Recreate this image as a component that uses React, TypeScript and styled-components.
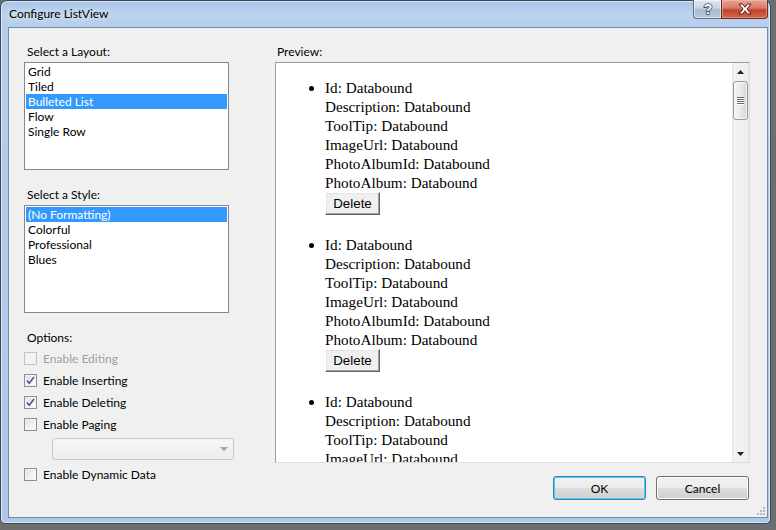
import styled, { createGlobalStyle } from "styled-components";

const GlobalStyle = createGlobalStyle`
  html, body {
    margin: 0;
    padding: 0;
    background: #6e6e6e;
    overflow: hidden;
  }
  body {
    width: 776px;
    height: 530px;
    font-family: "Segoe UI", Lato, "Noto Sans", sans-serif;
    font-size: 12px;
    color: #000;
  }
`;

const layouts = ["Grid", "Tiled", "Bulleted List", "Flow", "Single Row"];
const styles = ["(No Formatting)", "Colorful", "Professional", "Blues"];
const fields = ["Id", "Description", "ToolTip", "ImageUrl", "PhotoAlbumId", "PhotoAlbum"];

const options = [
  { label: "Enable Editing", checked: false, disabled: true },
  { label: "Enable Inserting", checked: true, disabled: false },
  { label: "Enable Deleting", checked: true, disabled: false },
  { label: "Enable Paging", checked: false, disabled: false },
];

export default function App() {
  return (
    <>
      <GlobalStyle />
      <Window>
        <TitleBar>
          <Caption>Configure ListView</Caption>
          <CaptionButtons>
            <HelpButton>
              <svg width="12" height="14" viewBox="0 0 12 14">
                <text
                  x="6"
                  y="12"
                  textAnchor="middle"
                  fontFamily="Liberation Sans, sans-serif"
                  fontWeight="bold"
                  fontSize="14"
                  fill="#fff"
                  stroke="#3b4a5e"
                  strokeWidth="1.6"
                  paintOrder="stroke"
                >
                  ?
                </text>
              </svg>
            </HelpButton>
            <CloseButton>
              <svg width="14" height="12" viewBox="0 0 14 12">
                <path
                  d="M1 1h3.5L7 4.2 9.5 1H13L9 6l4 5H9.5L7 7.8 4.5 11H1l4-5z"
                  fill="#fff"
                  stroke="#5a1d14"
                  strokeWidth="1"
                  strokeLinejoin="round"
                />
              </svg>
            </CloseButton>
          </CaptionButtons>
        </TitleBar>

        <Client>
          <LeftColumn>
            <GroupLabel>Select a Layout:</GroupLabel>
            <ListBox>
              {layouts.map((l) => (
                <ListItem key={l} $selected={l === "Bulleted List"}>
                  {l}
                </ListItem>
              ))}
            </ListBox>

            <GroupLabel $gap>Select a Style:</GroupLabel>
            <ListBox>
              {styles.map((s) => (
                <ListItem key={s} $selected={s === "(No Formatting)"}>
                  {s}
                </ListItem>
              ))}
            </ListBox>

            <GroupLabel $gap>Options:</GroupLabel>
            <OptionList>
              {options.map((o) => (
                <OptionRow key={o.label} $disabled={o.disabled}>
                  <CheckBox $disabled={o.disabled}>
                    {o.checked && (
                      <svg width="9" height="9" viewBox="0 0 9 9">
                        <path
                          d="M1 4.6l2.3 2.6L8 1"
                          fill="none"
                          stroke="#4a5f9c"
                          strokeWidth="1.7"
                        />
                      </svg>
                    )}
                  </CheckBox>
                  {o.label}
                </OptionRow>
              ))}
              <ComboBox>
                <svg width="8" height="5" viewBox="0 0 8 5">
                  <path d="M0 0h8L4 4.5z" fill="#a9a9a9" />
                </svg>
              </ComboBox>
              <OptionRow>
                <CheckBox />
                Enable Dynamic Data
              </OptionRow>
            </OptionList>
          </LeftColumn>

          <RightColumn>
            <GroupLabel $indent>Preview:</GroupLabel>
            <Preview>
              <PreviewContent>
                <BulletList>
                  {[0, 1, 2].map((i) => (
                    <Bullet key={i}>
                      {fields.map((f) => (
                        <div key={f}>{f}: Databound</div>
                      ))}
                      <DeleteButton>Delete</DeleteButton>
                    </Bullet>
                  ))}
                </BulletList>
              </PreviewContent>
              <ScrollBar>
                <ScrollArrow>
                  <svg width="7" height="4" viewBox="0 0 7 4">
                    <path d="M3.5 0L7 4H0z" fill="#222" />
                  </svg>
                </ScrollArrow>
                <ScrollThumb>
                  <Grip />
                  <Grip />
                  <Grip />
                  <Grip />
                </ScrollThumb>
                <ScrollTrack />
                <ScrollArrow>
                  <svg width="7" height="4" viewBox="0 0 7 4">
                    <path d="M0 0h7L3.5 4z" fill="#222" />
                  </svg>
                </ScrollArrow>
              </ScrollBar>
            </Preview>
            <Footer>
              <DialogButton $isDefault>OK</DialogButton>
              <DialogButton>Cancel</DialogButton>
            </Footer>
          </RightColumn>

          <ResizeGrip>
            <svg width="10" height="10" viewBox="0 0 10 10">
              {[
                [8, 2],
                [8, 5],
                [5, 5],
                [8, 8],
                [5, 8],
                [2, 8],
              ].map(([x, y]) => (
                <rect key={`${x}-${y}`} x={x - 1} y={y - 1} width="2" height="2" fill="#b8b8b8" />
              ))}
            </svg>
          </ResizeGrip>
        </Client>
      </Window>
    </>
  );
}

const Window = styled.div`
  box-sizing: border-box;
  width: 771px;
  height: 524px;
  padding: 0 2px 5px 7px;
  border: 1px solid #3a4a5e;
  border-radius: 7px 7px 5px 5px;
  background: linear-gradient(
    180deg,
    #a9c5e6 0px,
    #bcd3ee 14px,
    #b5cdea 26px,
    #adc8e8 100%
  );
  box-shadow: inset 0 0 0 1px rgba(255, 255, 255, 0.55);
`;

const TitleBar = styled.div`
  display: flex;
  align-items: flex-start;
  height: 26px;
`;

const Caption = styled.div`
  padding: 5px 0 0 1px;
  line-height: 15px;
  font-size: 12px;
  color: #000;
  text-shadow: 0 0 6px rgba(255, 255, 255, 0.9);
`;

const CaptionButtons = styled.div`
  display: flex;
  margin-left: auto;
  margin-top: -1px;
`;

const CaptionButton = styled.div`
  box-sizing: border-box;
  height: 19px;
  display: flex;
  align-items: center;
  justify-content: center;
  border: 1px solid #5b6f89;
  border-top: none;
`;

const HelpButton = styled(CaptionButton)`
  width: 28px;
  border-right: none;
  border-bottom-left-radius: 4px;
  background: linear-gradient(180deg, #dfe8f3 0%, #c6d4e5 45%, #a7b9cf 55%, #b8c9dc 100%);
  box-shadow: inset 0 0 0 1px rgba(255, 255, 255, 0.5);
`;

const CloseButton = styled(CaptionButton)`
  width: 47px;
  border-color: #6a2a22;
  border-bottom-right-radius: 4px;
  background: linear-gradient(180deg, #e8a595 0%, #d8786a 45%, #c2432d 55%, #d2654a 100%);
  box-shadow: inset 0 0 0 1px rgba(255, 200, 190, 0.45);
`;

const Client = styled.div`
  position: relative;
  box-sizing: border-box;
  height: 491px;
  display: flex;
  gap: 41px;
  padding: 16px 17px 0 15px;
  background: #f0f0f0;
  border: 1px solid #6f8bae;
`;

const LeftColumn = styled.div`
  width: 210px;
  display: flex;
  flex-direction: column;
`;

const RightColumn = styled.div`
  width: 475px;
  display: flex;
  flex-direction: column;
`;

const GroupLabel = styled.div<{ $gap?: boolean; $indent?: boolean }>`
  line-height: 15px;
  margin: ${(p) => (p.$gap ? "17px" : "0")} 0 3px ${(p) => (p.$indent ? "2px" : "3px")};
`;

const ListBox = styled.div`
  box-sizing: border-box;
  width: 205px;
  height: 108px;
  padding: 1px;
  background: #fff;
  border: 1px solid #828790;
`;

const ListItem = styled.div<{ $selected?: boolean }>`
  line-height: 15px;
  padding-left: 2px;
  background: ${(p) => (p.$selected ? "#3399ff" : "transparent")};
  color: ${(p) => (p.$selected ? "#fff" : "#000")};
`;

const OptionList = styled.div`
  display: flex;
  flex-direction: column;
  margin-top: -1px;
`;

const OptionRow = styled.div<{ $disabled?: boolean }>`
  display: flex;
  align-items: center;
  gap: 6px;
  height: 22px;
  color: ${(p) => (p.$disabled ? "#a0a0a0" : "#000")};
`;

const CheckBox = styled.span<{ $disabled?: boolean }>`
  box-sizing: border-box;
  width: 13px;
  height: 13px;
  display: flex;
  align-items: center;
  justify-content: center;
  border: 1px solid ${(p) => (p.$disabled ? "#c4c4c4" : "#8e8f8f")};
  background: ${(p) =>
    p.$disabled
      ? "#f4f4f4"
      : "linear-gradient(135deg, #dcdcdc 0%, #f0f0f0 50%, #ffffff 100%)"};
  box-shadow: inset 0 0 0 1px ${(p) => (p.$disabled ? "#f0f0f0" : "#f4f4f4")};
`;

const ComboBox = styled.div`
  box-sizing: border-box;
  width: 182px;
  height: 22px;
  margin: 3px 0 3px 28px;
  display: flex;
  align-items: center;
  justify-content: flex-end;
  padding-right: 5px;
  border: 1px solid #c8c8c8;
  border-radius: 3px;
  background: linear-gradient(180deg, #f6f6f6, #eeeeee);
`;

const Preview = styled.div`
  box-sizing: border-box;
  height: 401px;
  display: flex;
  background: #fff;
  border: 1px solid #9c9c9c;
  border-right-color: #dcdcdc;
  border-bottom-color: #dcdcdc;
`;

const PreviewContent = styled.div`
  flex: 1;
  overflow: hidden;
  padding-top: 15px;
  font-family: "Liberation Serif", "Times New Roman", serif;
  font-size: 15.2px;
  line-height: 19px;
`;

const BulletList = styled.ul`
  margin: 0;
  padding-left: 49px;
  list-style: disc;
`;

const Bullet = styled.li`
  margin-bottom: 20px;
`;

const DeleteButton = styled.div`
  box-sizing: border-box;
  width: 55px;
  height: 23px;
  display: flex;
  align-items: center;
  justify-content: center;
  font-family: "Liberation Sans", Arial, sans-serif;
  font-size: 13.33px;
  background: #f0f0f0;
  border-top: 1px solid #fff;
  border-left: 1px solid #fff;
  border-right: 1px solid #646464;
  border-bottom: 1px solid #646464;
  box-shadow: inset -1px -1px 0 #a0a0a0, inset 1px 1px 0 #e3e3e3;
`;

const ScrollBar = styled.div`
  width: 17px;
  display: flex;
  flex-direction: column;
  align-items: center;
  background: linear-gradient(90deg, #e3e3e3 0px, #f2f2f2 2px, #f0f0f0 14px, #e8e8e8 17px);
`;

const ScrollArrow = styled.div`
  height: 17px;
  width: 17px;
  display: flex;
  align-items: center;
  justify-content: center;
`;

const ScrollThumb = styled.div`
  box-sizing: border-box;
  width: 15px;
  height: 39px;
  margin-top: 1px;
  display: flex;
  flex-direction: column;
  align-items: center;
  justify-content: center;
  gap: 1px;
  border: 1px solid #979797;
  border-radius: 3px;
  background: linear-gradient(90deg, #f4f4f4 0%, #e9e9e9 50%, #d6d6d6 100%);
  box-shadow: inset 0 0 0 1px rgba(255, 255, 255, 0.75);
`;

const Grip = styled.span`
  width: 7px;
  height: 1px;
  background: #6a6a6a;
  box-shadow: 0 1px 0 #fff;
`;

const ScrollTrack = styled.div`
  flex: 1;
`;

const Footer = styled.div`
  display: flex;
  justify-content: flex-end;
  gap: 10px;
  margin-top: 13px;
  padding-right: 1px;
`;

const DialogButton = styled.div<{ $isDefault?: boolean }>`
  box-sizing: border-box;
  width: 93px;
  height: 24px;
  display: flex;
  align-items: center;
  justify-content: center;
  border: 1px solid ${(p) => (p.$isDefault ? "#3c7fb1" : "#707070")};
  border-radius: 3px;
  background: linear-gradient(180deg, #f2f2f2 0%, #ebebeb 50%, #dddddd 51%, #cfcfcf 100%);
  box-shadow: inset 0 0 0 1px ${(p) => (p.$isDefault ? "#48d0f9" : "#fcfcfc")};
`;

const ResizeGrip = styled.div`
  position: absolute;
  right: 1px;
  bottom: 1px;
  width: 10px;
  height: 10px;
  line-height: 0;
`;
